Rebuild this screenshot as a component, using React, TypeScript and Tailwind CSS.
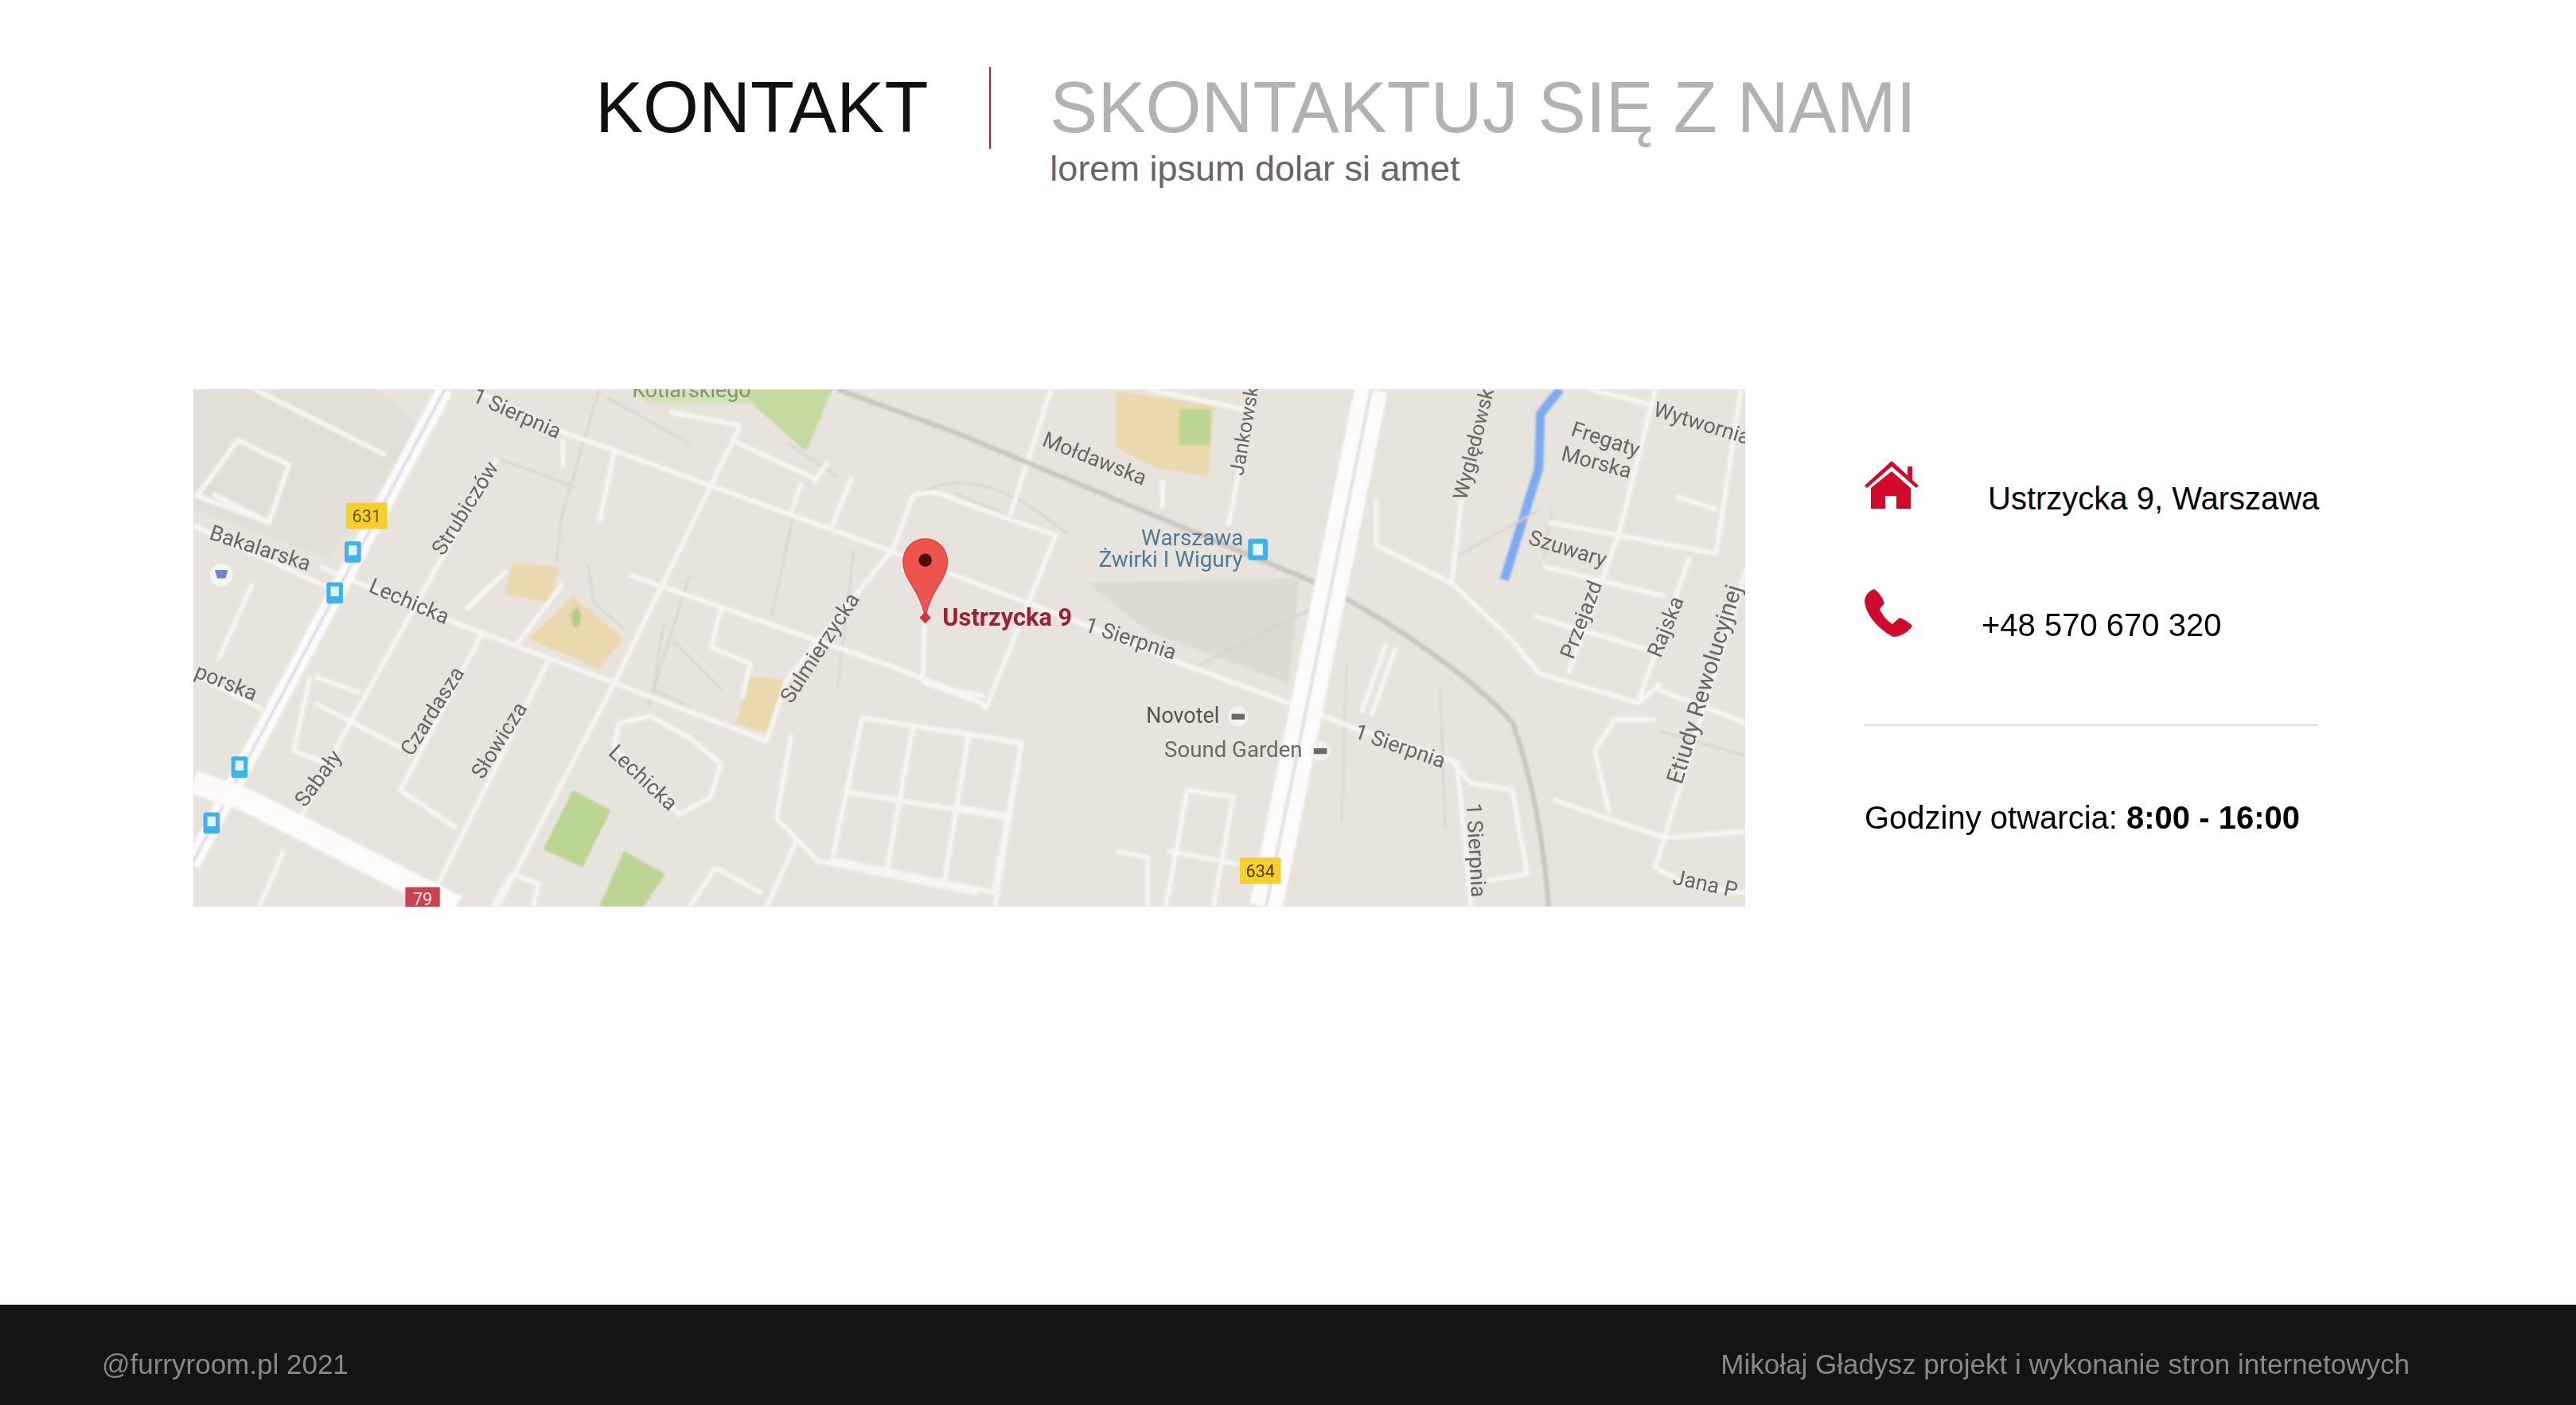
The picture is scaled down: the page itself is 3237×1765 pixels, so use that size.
const roads: string[] = [
  "M155 237 L235 277", "M145 268 L176 283 L164 318 L120 302 L145 268", "M118 320 L205 360", "M130 301 L164 318", "M154 355 L133 402", "M118 410 L160 432",
  "M290 238 L343 263 L544 336 L660 380 L714 402 L785 428 L830 445 L884 463 L896 477 L921 481 L930 532 L906 536",
  "M887 463 L896 552",
  "M195 345 L272 377 L467 451 L479 414 L544 334",
  "M383 350 L544 406 L580 420 L600 424",
  "M544 334 L556 302 C565 298 575 300 581 304 L643 326 L600 432",
  "M451 259 L374 416 L303 552",
  "M303 279 L204 457 L182 500",
  "M294 385 L244 481 L278 504",
  "M334 402 L260 552",
  "M192 412 L220 422", "M189 412 L179 457 L204 467", "M192 428 L244 455",
  "M343 355 L315 392", "M309 347 L284 371",
  "M408 251 L451 259", "M343 267 L343 285", "M374 276 L365 318", "M448 269 L498 292", "M504 281 L496 294", "M519 290 L507 320", "M488 294 L482 312",
  "M439 371 L433 394 L457 404 L452 425",
  "M563 380 L562 415 L598 428 L600 432",
  "M525 437 L622 452 L605 543 L507 523 Z", "M556 442 L540 530", "M590 447 L575 537", "M515 482 L614 498",
  "M482 447 L473 498 L498 524 L596 544", "M485 512 L467 552",
  "M436 528 L420 552", "M436 528 L464 544",
  "M312 532 L328 538 L325 552", "M312 532 L300 552", "M173 518 L158 552",
  "M377 440 L396 436 L420 449 L439 465 L433 485 L414 496 L374 455 L377 440",
  "M723 481 L751 485 L739 552", "M723 481 L710 552", "M680 518 L699 522 L699 552", "M711 518 L754 526",
  "M581 420 L600 424", "M581 445 L622 453 L606 552", "M581 491 L612 496", "M640 237 L615 314", "M699 237 L757 249", "M708 292 L708 310", "M764 238 L748 320",
  "M838 304 L838 332 L884 355 L921 390 L937 410 L998 428 L1011 416",
  "M890 304 L884 355", "M1008 237 L986 324 L955 410", "M943 318 L1045 337 L1060 237", "M940 345 L1014 363", "M934 375 L1005 396",
  "M1029 339 L998 426", "M1063 347 L1008 528 L1026 538 L1063 544", "M946 487 L1014 510 L1063 506", "M1020 302 L1045 310", "M968 237 L1008 247",
  "M980 495 L971 457 L983 438 L1008 438",
  "M850 394 L835 436", "M844 392 L829 434", "M1063 440 L1010 420",
];

const thin: string[] = [
  "M358 343 L362 367 L380 383", "M365 237 L342 315 L339 342", "M303 279 L352 297", "M420 350 L395 430", "M485 305 L470 375", "M520 335 L510 420",
  "M370 242 L420 270", "M510 290 L480 270", "M404 380 L398 420 L420 430", "M410 390 L440 420",
  "M560 300 C590 285 620 300 650 325", "M730 405 L800 370", "M581 300 L640 325", "M820 405 L817 500", "M877 420 L880 505",
  "M938 310 L885 340", "M945 310 L940 340", "M1010 445 L1063 460",
];

const bus: [number, number][] = [[215, 336], [204, 361], [146, 467], [129, 501]];

const labels: [string, number, number, number, number?][] = [
  ["1 Sierpnia", 287, 244, 24],
  ["Bakalarska", 127, 328, 18],
  ["Strubiczów", 270, 339, -58],
  ["Lechicka", 224, 360, 23],
  ["porska", 118, 412, 22],
  ["Czardasza", 251, 461, -58],
  ["Słowicza", 294, 475, -58],
  ["Sabały", 186, 492, -54],
  ["Sulmierzycka", 482, 429, -57],
  ["Lechicka", 370, 459, 43],
  ["Mołdawska", 634, 271, 21.6],
  ["Jankowski", 757, 290, -80, 12.2],
  ["Wyględowska", 893, 305, -76, 12.4],
  ["Fregaty", 956, 265, 18],
  ["Morska", 950, 280, 15],
  ["Wytwornia", 1006, 253, 17],
  ["Szuwary", 930, 331, 17],
  ["Przejazd", 958, 402, -69],
  ["Rajska", 1011, 401, -68],
  ["Etiudy Rewolucyjnej", 1024, 478, -73, 14.3],
  ["1 Sierpnia", 660, 384, 18],
  ["1 Sierpnia", 824, 449, 19],
  ["1 Sierpnia", 893, 489, 87],
  ["Jana P", 1018, 538, 12],
];

function MapView() {
  return (
    <svg viewBox="118 237 944.6 314.9" className="block h-[650px] w-[1950px] shrink-0 bg-[#e8e4dd]" style={{ fontFamily: "Roboto, sans-serif" }}>
      <defs>
        <filter id="soft" x="-5%" y="-5%" width="110%" height="110%"><feGaussianBlur stdDeviation="0.7" /></filter>
        <filter id="softer" x="-5%" y="-5%" width="110%" height="110%"><feGaussianBlur stdDeviation="0.3" /></filter>
      </defs>
      <g filter="url(#soft)">
        <polygon points="118,237 230,237 260,262 200,340 118,310" fill="#e3dfd8" />
        <polygon points="662,355 791,352 785,416 700,385" fill="#dedad3" />
        <polygon points="448,237 507,237 491,275" fill="#c6d9a0" />
        <polygon points="385,237 448,237 460,246 395,246" fill="#d6e0bd" />
        <polygon points="349,481 372,493 355,528 331,517" fill="#bcd494" />
        <polygon points="380,518 405,532 392,552 365,552" fill="#bcd494" />
        <polygon points="312,343 340,345 335,367 308,362" fill="#ead9ae" />
        <polygon points="349,363 380,389 365,407 322,389" fill="#ead9ae" />
        <ellipse cx="351" cy="376" rx="3" ry="6" fill="#b7cc8c" />
        <polygon points="457,412 479,414 467,446 448,440" fill="#ead9ae" />
        <polygon points="680,238 739,247 736,290 705,285 680,273" fill="#ead9ae" />
        <rect x="718" y="249" width="19" height="22" fill="#bcd494" />
        <path d="M950 237 L938 252 L937 285 L916 353" fill="none" stroke="#7eaaf0" strokeWidth="5.5" />
        <g fill="none" stroke="#d6d3cc" strokeWidth="1.2">
          {thin.map((d, i) => <path key={i} d={d} />)}
        </g>
        <g fill="none" stroke="#f7f5f1" strokeWidth="2.8" strokeLinejoin="round">
          {roads.map((d, i) => <path key={i} d={d} />)}
        </g>
        <path d="M510 237 L581 263 L797 353 C850 378 905 420 921 440 C932 470 940 510 943 552" fill="none" stroke="#c9c6bf" strokeWidth="3" />
        <path d="M271 237 L117 526" fill="none" stroke="#fdfcfb" strokeWidth="10" />
        <path d="M271 237 L117 526" fill="none" stroke="#d2cfdb" strokeWidth="1.4" />
        <path d="M118 476 L150 487 L278 552" fill="none" stroke="#fdfcfb" strokeWidth="14" />
        <path d="M835 237 L771 552" fill="none" stroke="#fdfcfb" strokeWidth="20" />
        <path d="M835 237 L771 552" fill="none" stroke="#dcd9e0" strokeWidth="1.8" />
      </g>
      <g filter="url(#softer)">
        <g fill="#676562" fontSize="13">
          {labels.map(([t, x, y, r, s], i) => (
            <text key={i} x={x} y={y} fontSize={s} transform={`rotate(${r} ${x} ${y})`}>{t}</text>
          ))}
          <text x="385" y="242" fill="#7c9a66">Kotlarskiego</text>
        </g>
        <text x="695" y="332" fontSize="13.5" fill="#4c7c99">Warszawa</text>
        <text x="669" y="345" fontSize="13.5" fill="#4c7c99">Żwirki I Wigury</text>
        <rect x="760" y="328" width="12" height="13" rx="1.5" fill="#3fb2ea" />
        <rect x="763" y="331" width="6" height="7" fill="#e8f6fc" />
        <text x="698" y="440" fontSize="13" fill="#55524e">Novotel</text>
        <text x="709" y="461" fontSize="13.4" fill="#6c6a66">Sound Garden</text>
        <circle cx="754" cy="436" r="6" fill="#f3f1ed" /><rect x="750" y="434.5" width="8" height="3.5" fill="#6c6a66" />
        <circle cx="804" cy="457" r="6" fill="#f3f1ed" /><rect x="800" y="455.5" width="8" height="3.5" fill="#6c6a66" />

        <rect x="211" y="306" width="25" height="16" rx="1" fill="#f6cf2e" />
        <text x="223.5" y="318" fontSize="10.5" fill="#6b5c12" textAnchor="middle">631</text>
        <rect x="755" y="522" width="25" height="16" rx="1" fill="#f6cf2e" />
        <text x="767.5" y="534" fontSize="10.5" fill="#4c4310" textAnchor="middle">634</text>
        <rect x="247" y="540" width="21" height="14" fill="#c9434f" />
        <text x="257.5" y="551" fontSize="10.5" fill="#f6e3e3" textAnchor="middle">79</text>
        {bus.map(([x, y], i) => (
          <g key={i}>
            <rect x={x - 5} y={y - 6.5} width="10" height="13" rx="1.5" fill="#3fb2ea" />
            <rect x={x - 2.5} y={y - 4} width="5" height="6" fill="#dff3fb" />
          </g>
        ))}
        <circle cx="135" cy="350" r="7" fill="#f6f4f0" />
        <path d="M131 347 H139 L137.5 352 H132.5 Z" fill="#6e86c4" />

        <path d="M563.5 328 C556 328 550 334 550 342 C550 353 560 358 563.5 376 C567 358 577 353 577 342 C577 334 571 328 563.5 328 Z" fill="#ef5350" stroke="#d8403c" strokeWidth="0.6" />
        <circle cx="563.5" cy="341" r="4" fill="#4e0f0c" />
        <rect x="561" y="373.5" width="5" height="5" transform="rotate(45 563.5 376)" fill="#c8373c" />
        <text x="574" y="381" fontSize="14.9" fontWeight="700" fill="#9c2230">Ustrzycka 9</text>
      </g>
    </svg>
  );
}

function HouseIcon() {
  return (
    <svg viewBox="0 0 68 60" className="h-[60px] w-[68px] shrink-0" fill="#cf0a2c">
      <path d="M34 0 L54 18 V7 H60 V24 L68 31 L65 34 L34 7 L3 34 L0 31 Z" />
      <path d="M34 13 L58 34 V60 H40 V44 H26 V60 H8 V34 Z" />
    </svg>
  );
}

function PhoneIcon() {
  return (
    <svg viewBox="0 0 60 60" className="h-[60px] w-[60px] shrink-0" fill="#cf0a2c">
      <path d="M12 0 C6 2 0 8 0 16 C2 34 20 52 36 60 C44 60 56 54 60 46 C56 42 50 38 44 36 L35 44 C28 40 22 32 19 25 L25 18 C23 11 18 4 12 0 Z" />
    </svg>
  );
}

export default function App() {
  return (
    <div className="flex min-h-[1765px] flex-col bg-white font-['Liberation_Sans',Arial,sans-serif]">
      <header className="flex items-start pl-[748px] pt-[84px]">
        <h1 className="text-[90px] leading-[103px] font-normal text-[#111111]">KONTAKT</h1>
        <div className="ml-[77px] h-[103px] w-[2px] bg-[#d3143c]" />
        <div className="ml-[74px]">
          <h2 className="text-[90px] leading-[103px] font-normal text-[#b2b2b2]">SKONTAKTUJ SIĘ Z NAMI</h2>
          <p className="text-[45px] leading-[50px] text-[#666666]">lorem ipsum dolar si amet</p>
        </div>
      </header>

      <main className="mt-[252px] flex items-start pl-[243px]">
        <MapView />
        <aside className="ml-[150px] w-[570px] pt-[90px] text-[40px] leading-[47px] text-black">
          <div className="flex items-start">
            <HouseIcon />
            <span className="ml-[87px] mt-[24px] whitespace-nowrap">Ustrzycka 9, Warszawa</span>
          </div>
          <div className="mt-[90px] flex items-start">
            <PhoneIcon />
            <span className="ml-[87px] mt-[22px] whitespace-nowrap">+48 570 670 320</span>
          </div>
          <hr className="mt-[101px] h-[2px] border-0 bg-[#dddddd]" />
          <p className="mt-[92px] whitespace-nowrap">Godziny otwarcia: <b className="font-bold">8:00 - 16:00</b></p>
        </aside>
      </main>

      <footer className="mt-auto flex h-[126px] items-center justify-between bg-[#141414] pl-[128px] pr-[209px] pt-[24px] text-[35px] text-[#888888]">
        <span>@furryroom.pl 2021</span>
        <span>Mikołaj Gładysz projekt i wykonanie stron internetowych</span>
      </footer>
    </div>
  );
}
